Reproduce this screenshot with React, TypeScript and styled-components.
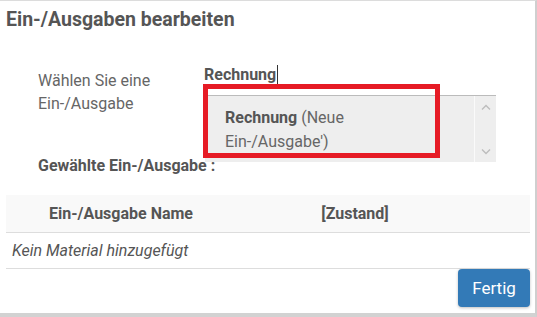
import * as React from "react";
import styled, { createGlobalStyle } from "styled-components";

const GlobalStyle = createGlobalStyle`
  html, body {
    margin: 0;
    padding: 0;
    background: #fff;
  }
  body {
    font-family: Roboto, "Liberation Sans", sans-serif;
    color: #555;
  }
`;

const Page = styled.div`
  box-sizing: border-box;
  width: 537px;
  height: 317px;
  border-top: 1px solid #dcdcdc;
  border-right: 2px solid #cfcfcf;
  border-bottom: 4px solid #d2d2d2;
  display: flex;
  flex-direction: column;
  padding: 0 5px 0 6px;
`;

const Title = styled.h4`
  margin: 0;
  padding-top: 7px;
  font-size: 19.5px;
  line-height: 24px;
  font-weight: 700;
  color: #555;
`;

const FormRow = styled.div`
  display: grid;
  grid-template-columns: 166px 1fr;
  margin-top: 32px;
  padding-left: 32px;
`;

const Label = styled.label`
  padding-top: 5px;
  font-size: 16px;
  line-height: 23px;
  color: #666;
  width: 130px;
`;

const Field = styled.div`
  position: relative;
`;

const InputText = styled.div`
  height: 20px;
  margin-top: 1px;
  display: flex;
  align-items: center;
  font-size: 16px;
  line-height: 20px;
  font-weight: 700;
  color: #555;
`;

const Caret = styled.span`
  display: inline-block;
  width: 1px;
  height: 20px;
  margin-left: 1px;
  background: #333;
`;

const Suggestions = styled.div`
  position: absolute;
  top: 31px;
  left: 1px;
  width: 291px;
  height: 67px;
  box-sizing: border-box;
  border-top: 1px solid #bbb;
  background: #eee;
  display: flex;
`;

const SuggestionList = styled.ul`
  flex: 1;
  margin: 0;
  padding: 10px 0 0 20px;
  list-style: none;
`;

const SuggestionItem = styled.li`
  width: 150px;
  font-size: 16px;
  line-height: 24px;
  color: #666;

  & > b {
    color: #555;
  }
`;

const ScrollTrack = styled.div`
  width: 21px;
  border-left: 1px solid #fafafa;
  display: flex;
  flex-direction: column;
  justify-content: space-between;
  align-items: center;
  padding: 8px 0 7px;
`;

const Highlight = styled.div`
  position: absolute;
  top: 20px;
  left: -1px;
  width: 237px;
  height: 74px;
  box-sizing: border-box;
  border: 5px solid #e61b25;
  pointer-events: none;
`;

const SelectedLabel = styled.div`
  margin-top: 41px;
  padding-left: 32px;
  font-size: 16px;
  line-height: 20px;
  font-weight: 700;
  color: #555;
`;

const Table = styled.div`
  margin-top: 19px;
  width: 524px;
`;

const HeadRow = styled.div`
  display: grid;
  grid-template-columns: 230px 238px 1fr;
  height: 37px;
  align-items: center;
  background: #f9f9f9;
  border-bottom: 1px solid #ddd;
  font-size: 16px;
  font-weight: 700;
  color: #555;
`;

const HeadCell = styled.div`
  text-align: center;
`;

const EmptyRow = styled.div`
  height: 35px;
  display: flex;
  align-items: center;
  padding-left: 6px;
  border-bottom: 1px solid #ddd;
  font-size: 16px;
  font-style: italic;
  color: #555;
`;

const Footer = styled.div`
  display: flex;
  justify-content: flex-end;
  width: 524px;
`;

const Button = styled.button`
  width: 72px;
  height: 38px;
  border: none;
  border-radius: 4px;
  background: #337ab7;
  color: #fff;
  font-family: Roboto, "Liberation Sans", sans-serif;
  font-size: 17px;
  box-shadow: 0 1px 3px rgba(0, 0, 0, 0.25);
  cursor: pointer;
`;

const Chevron: React.FC<{ up?: boolean }> = ({ up }) => (
  <svg width="10" height="6" viewBox="0 0 10 6" fill="none">
    <path
      d={up ? "M1 5.5L5 1.5L9 5.5" : "M1 0.5L5 4.5L9 0.5"}
      stroke="#bdbdbd"
      strokeWidth="1.4"
    />
  </svg>
);

export default function App() {
  return (
    <>
      <GlobalStyle />
      <Page>
        <Title>Ein-/Ausgaben bearbeiten</Title>
        <FormRow>
          <Label>Wählen Sie eine Ein-/Ausgabe</Label>
          <Field>
            <InputText>
              Rechnung
              <Caret />
            </InputText>
            <Suggestions>
              <SuggestionList>
                <SuggestionItem>
                  <b>Rechnung</b> (Neue Ein-/Ausgabe')
                </SuggestionItem>
              </SuggestionList>
              <ScrollTrack>
                <Chevron up />
                <Chevron />
              </ScrollTrack>
            </Suggestions>
            <Highlight />
          </Field>
        </FormRow>
        <SelectedLabel>Gewählte Ein-/Ausgabe :</SelectedLabel>
        <Table>
          <HeadRow>
            <HeadCell>Ein-/Ausgabe Name</HeadCell>
            <HeadCell>[Zustand]</HeadCell>
            <HeadCell />
          </HeadRow>
          <EmptyRow>Kein Material hinzugefügt</EmptyRow>
        </Table>
        <Footer>
          <Button>Fertig</Button>
        </Footer>
      </Page>
    </>
  );
}
